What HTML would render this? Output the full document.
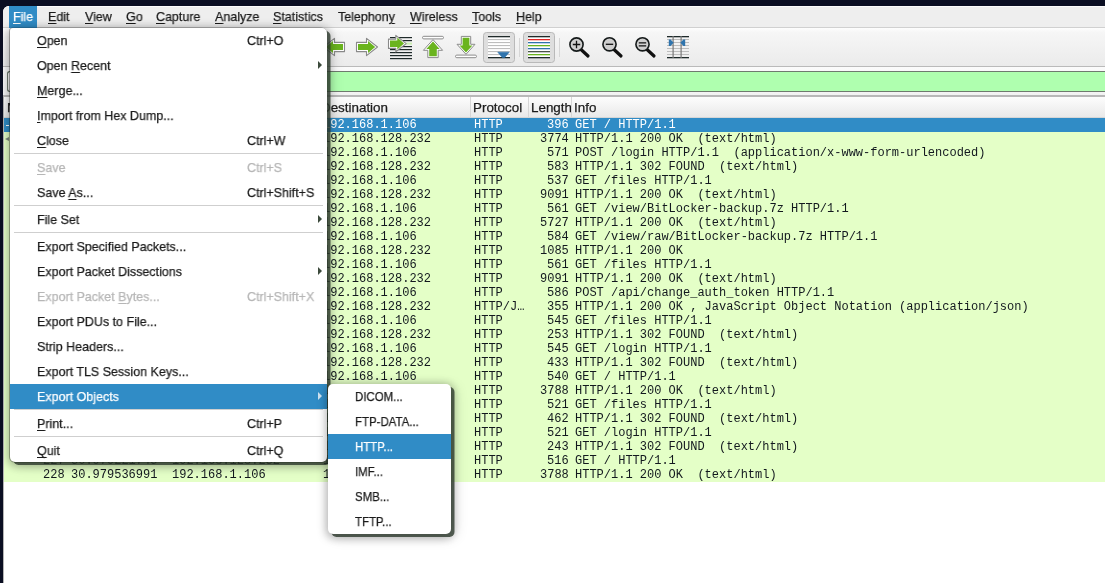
<!DOCTYPE html>
<html><head><meta charset="utf-8">
<style>
*{margin:0;padding:0;box-sizing:border-box}
html,body{width:1105px;height:583px;overflow:hidden;background:#0a0e22;font-family:"Liberation Sans",sans-serif;font-size:12px;color:#1b1b1b;position:relative}
#win{position:absolute;left:3px;top:6px;width:1102px;height:577px;background:#fff;border-top-left-radius:6px;overflow:hidden}
#menubar{position:absolute;left:3px;top:6px;width:1102px;height:22px;background:linear-gradient(#fcfcfc 0,#fcfcfc 1px,#eeeeee 1.5px,#eeeeee);border-bottom:1px solid #d0d0d0;border-top-left-radius:6px}
#menubar span{position:absolute;top:4px;line-height:14px;white-space:nowrap;font-size:13px;transform:scaleX(.96);transform-origin:0 50%}
#menubar .sel{background:#308cc6;color:#fff}
u{text-decoration:underline;text-underline-offset:2px;text-decoration-thickness:1px}
#toolbar{position:absolute;left:3px;top:28px;width:1102px;height:39px;background:linear-gradient(#fdfdfd,#f6f6f6 12%,#ebebeb);border-bottom:1px solid #bababa}
#filter{position:absolute;left:7px;top:71px;width:1110px;height:21px;background:#afffaf;border:1px solid #6f7a6f;border-radius:3px}
#hdr{position:absolute;left:3px;top:95px;width:1102px;height:23px;background:linear-gradient(#fdfdfd,#e9e9e9);border-top:2px solid #b8b8b8;border-bottom:1px solid #d6d6d6}
#hdr span{position:absolute;top:4px;line-height:14px;font-size:13px;transform:scaleX(1.03);transform-origin:0 50%}
#hdr i{position:absolute;top:0;width:1px;height:20px;background:#d6d6d6}
.row{position:absolute;left:3px;width:1102px;height:14px;background:#e4ffc7;font-family:"Liberation Mono",monospace;font-size:12px;line-height:14px;color:#12181e;white-space:pre}
.row.s{background:#308cc6;color:#fff}
.row span{position:absolute;top:0}
.menu{position:absolute;background:#fff;border-radius:5px;box-shadow:-0.5px 0 0 .5px rgba(0,0,0,.3),3.5px 3px 0 rgba(45,58,45,.8),0 2px 10px 2px rgba(0,0,0,.27),4px 3px 14px rgba(0,0,0,.15)}
.mi{position:absolute;left:0;width:100%;height:25px;line-height:25px;white-space:nowrap}
.mi .t,.mi .k{font-size:13px;transform:scaleX(.96);transform-origin:0 50%}
.mi .t{position:absolute;left:27px}
.mi .k{position:absolute;left:237px}
.mi.d{color:#b6b6b6}
.mi.h{background:#308cc6;color:#fff}
.arr{position:absolute;left:307.5px;top:7.5px;width:0;height:0;border-left:4px solid #3c4a3c;border-top:4px solid transparent;border-bottom:4px solid transparent}
.mi.h .arr{border-left-color:#cfe3f1}
.sep{position:absolute;left:4px;right:4px;height:1px;background:#cfcfcf}

.el{letter-spacing:0}

#submenu .mi .t{transform:scaleX(.88)}
#band1{position:absolute;left:3px;top:67px;width:1102px;height:29px;background:linear-gradient(#fbfbfb,#f2f2f2)}
#bm{position:absolute;left:7px;top:71px;width:24px;height:21px;background:linear-gradient(#fafafa,#e8e8e8);border:1px solid #6f7a6f;border-right:none;border-radius:3px 0 0 3px}
.ind{position:absolute;background:#fff}
.mi .t,.mi .k,#menubar span,#hdr span,.row span{will-change:transform;-webkit-text-stroke:.25px currentColor}
.row span{-webkit-text-stroke:0}
#submenu{box-shadow:3.5px 3px 0 rgba(45,58,45,.8),0 2px 10px 2px rgba(0,0,0,.27),4px 3px 14px rgba(0,0,0,.15)}
#filemenu{border-top-left-radius:3px}

</style></head><body>
<div id="win"></div>
<div id="menubar">
  <div style="position:absolute;left:6px;top:0;width:28px;height:22px;background:#308cc6"></div><span style="left:10px;color:#fff"><u>F</u>ile</span>
  <span style="left:45px"><u>E</u>dit</span>
  <span style="left:82px"><u>V</u>iew</span>
  <span style="left:123px"><u>G</u>o</span>
  <span style="left:153px"><u>C</u>apture</span>
  <span style="left:212px"><u>A</u>nalyze</span>
  <span style="left:270px"><u>S</u>tatistics</span>
  <span style="left:335px">Telephon<u>y</u></span>
  <span style="left:407px"><u>W</u>ireless</span>
  <span style="left:469px"><u>T</u>ools</span>
  <span style="left:513px"><u>H</u>elp</span>
</div>
<div id="toolbar"></div>
<svg id="tbsvg" width="1105" height="68" viewBox="0 0 1105 68" style="position:absolute;left:0;top:0">
 <defs>
  <g id="arrowR">
   <path d="M0.5,-4.6 H10.5 V-8.6 L21.5,0 L10.5,8.6 V4.6 H0.5 Z" fill="#fff" stroke="#8a8a8a" stroke-width="1.1" stroke-linejoin="round"/>
   <path d="M2,-3 H12 V-6 L19.2,0 L12,6 V3 H2 Z" fill="#6ab41e"/>
  </g>
 </defs>
 <!-- back arrow (partially hidden) -->
 <g transform="translate(345,47) scale(-1,1)"><use href="#arrowR"/></g>
 <!-- forward arrow -->
 <g transform="translate(356,47)"><use href="#arrowR"/></g>
 <!-- go to packet -->
 <g>
  <rect x="390" y="37" width="22" height="1.2" fill="#1f2a2a"/>
  <rect x="390" y="40" width="22" height="1.2" fill="#1f2a2a"/>
  <rect x="400" y="42.6" width="12" height="2" fill="#c8eeae"/>
  <rect x="390" y="46" width="22" height="1.2" fill="#1f2a2a"/>
  <rect x="390" y="49" width="22" height="1.2" fill="#1f2a2a"/>
  <rect x="390" y="52" width="22" height="1.2" fill="#1f2a2a"/>
  <rect x="390" y="55" width="22" height="1.2" fill="#1f2a2a"/>
  <rect x="390" y="58" width="22" height="1.2" fill="#1f2a2a"/>
  <g transform="translate(388,43.6)">
   <path d="M0.5,-4.5 H7.8 V-8.2 L18.2,0 L7.8,8.2 V4.8 H0.5 Z" fill="#fff" stroke="#8a8a8a" stroke-width="1.1" stroke-linejoin="round"/>
   <path d="M2,-3 H9.3 V-6 L16,0 L9.3,6 V3.4 H2 Z" fill="#6ab41e"/>
  </g>
 </g>
 <!-- first packet -->
 <g>
  <rect x="422.5" y="36.3" width="21" height="2.6" rx="1.3" fill="#fff" stroke="#8a8a8a" stroke-width="1"/>
  <path d="M427.8,57.6 H438.2 V50.3 H442.6 L433,39.6 L423.4,50.3 H427.8 Z" fill="#fff" stroke="#8a8a8a" stroke-width="1" stroke-linejoin="round"/>
  <path d="M429.2,56.2 H436.8 V48.9 H439.6 L433,41.4 L426.4,48.9 H429.2 Z" fill="#6ab41e"/>
 </g>
 <!-- last packet -->
 <g>
  <rect x="455.5" y="55.1" width="21" height="2.6" rx="1.3" fill="#fff" stroke="#8a8a8a" stroke-width="1"/>
  <path d="M461.3,36.4 H470.7 V44.3 H475 L466,54.3 L457,44.3 H461.3 Z" fill="#fff" stroke="#8a8a8a" stroke-width="1" stroke-linejoin="round"/>
  <path d="M462.6,37.8 H469.4 V45.6 H472.4 L466,52.6 L459.6,45.6 H462.6 Z" fill="#6ab41e"/>
 </g>
 <!-- autoscroll pressed -->
 <g>
  <rect x="483.5" y="32.5" width="31" height="30" rx="3" fill="#dedede" stroke="#b9b9b9" stroke-width="1"/>
  <rect x="488" y="36" width="22" height="22" fill="#fff"/>
  <rect x="488" y="36" width="22" height="1.3" fill="#1f2a2a"/>
  <rect x="488" y="39" width="22" height="1.1" fill="#bdbdbd"/>
  <rect x="488" y="42" width="22" height="1.1" fill="#bdbdbd"/>
  <rect x="488" y="45" width="22" height="1.1" fill="#bdbdbd"/>
  <rect x="488" y="48" width="22" height="1.1" fill="#bdbdbd"/>
  <rect x="488" y="51" width="22" height="1.1" fill="#bdbdbd"/>
  <rect x="488" y="54" width="22" height="1.1" fill="#bdbdbd"/>
  <rect x="488" y="57" width="22" height="1.3" fill="#1f2a2a"/>
  <path d="M497.8,52.2 H509.2 L504.6,57.6 H502.4 Z" fill="#2f74ad" stroke="#2f74ad" stroke-width="0.6" stroke-linejoin="round"/>
 </g>
 <rect x="519" y="38" width="1" height="19" fill="#d6d6d6"/>
 <!-- colorize pressed -->
 <g>
  <rect x="523.5" y="32.5" width="31" height="30" rx="3" fill="#dedede" stroke="#b9b9b9" stroke-width="1"/>
  <rect x="528" y="36" width="22" height="22" fill="#fff"/>
  <rect x="528" y="36" width="22" height="1.3" fill="#1f2a2a"/>
  <rect x="528" y="39" width="22" height="1.3" fill="#e02626"/>
  <rect x="528" y="42" width="22" height="1.3" fill="#2f74ad"/>
  <rect x="528" y="45" width="22" height="1.3" fill="#6ab41e"/>
  <rect x="528" y="48" width="22" height="1.3" fill="#2f74ad"/>
  <rect x="528" y="51" width="22" height="1.3" fill="#4a5548"/>
  <rect x="528" y="54" width="22" height="1.3" fill="#6ab41e"/>
  <rect x="528" y="57" width="22" height="1.3" fill="#1f2a2a"/>
 </g>
 <rect x="559" y="38" width="1" height="19" fill="#d6d6d6"/>
 <!-- zoom in -->
 <g>
  <line x1="581" y1="49.5" x2="588" y2="56" stroke="#111" stroke-width="3.2" stroke-linecap="round"/>
  <circle cx="576.5" cy="44.5" r="6.6" fill="#cfcfcf" stroke="#151a1a" stroke-width="1.6"/>
  <path d="M572.8,44.5 H580.2 M576.5,40.8 V48.2" stroke="#111" stroke-width="1.3"/>
 </g>
 <!-- zoom out -->
 <g>
  <line x1="614" y1="49.5" x2="621" y2="56" stroke="#111" stroke-width="3.2" stroke-linecap="round"/>
  <circle cx="609.5" cy="44.3" r="6.6" fill="#cfcfcf" stroke="#151a1a" stroke-width="1.6"/>
  <path d="M605.8,44.3 H613.2" stroke="#111" stroke-width="1.3"/>
 </g>
 <!-- zoom 1:1 -->
 <g>
  <line x1="647" y1="49.5" x2="654" y2="56" stroke="#111" stroke-width="3.2" stroke-linecap="round"/>
  <circle cx="642.5" cy="44.3" r="6.6" fill="#cfcfcf" stroke="#151a1a" stroke-width="1.6"/>
  <path d="M638.8,42.8 H646.2 M638.8,45.8 H646.2" stroke="#111" stroke-width="1.2"/>
 </g>
 <!-- resize columns -->
 <g>
  <rect x="667" y="36" width="22" height="1.3" fill="#1f2a2a"/>
  <rect x="667" y="39" width="22" height="1" fill="#bdbdbd"/>
  <rect x="667" y="42" width="22" height="1" fill="#bdbdbd"/>
  <rect x="667" y="45" width="22" height="1" fill="#bdbdbd"/>
  <rect x="667" y="48" width="22" height="1" fill="#bdbdbd"/>
  <rect x="667" y="51" width="22" height="1" fill="#bdbdbd"/>
  <rect x="667" y="54" width="22" height="1" fill="#bdbdbd"/>
  <rect x="667" y="57" width="22" height="1.3" fill="#1f2a2a"/>
  <rect x="672.5" y="36" width="1.2" height="22" fill="#7a7a7a"/>
  <rect x="680.5" y="36" width="1.2" height="22" fill="#7a7a7a"/>
  <path d="M668.8,39.5 H670.6 L673.6,42.7 L670.6,46 H668.8 Z" fill="#2f74ad"/>
  <path d="M685.2,39.5 H683.4 L680.4,42.7 L683.4,46 H685.2 Z" fill="#2f74ad"/>
 </g>
</svg>

<div id="band1"></div>
<div id="filter"></div>
<div id="bm"></div>
<div id="hdr">
  <span style="left:4px">No.</span>
  <span style="left:318px">Destination</span>
  <span style="left:470px">Protocol</span>
  <span style="left:528px">Length</span>
  <span style="left:571px">Info</span>
  <i style="left:467px"></i><i style="left:525px"></i><i style="left:568px"></i>
</div>

<div id="rows">
<div class="row s" style="top:118px"><span class="r" style="right:1040px">1</span><span style="left:68px">0.000000000</span><span style="left:169px">192.168.128.232</span><span style="left:320px">192.168.1.106</span><span style="left:471px">HTTP</span><span class="r" style="right:536px">396</span><span style="left:572px">GET / HTTP/1.1</span></div><div class="row" style="top:132px"><span class="r" style="right:1040px">2</span><span style="left:68px">0.000000000</span><span style="left:169px">192.168.1.106</span><span style="left:320px">192.168.128.232</span><span style="left:471px">HTTP</span><span class="r" style="right:536px">3774</span><span style="left:572px">HTTP/1.1 200 OK  (text/html)</span></div><div class="row" style="top:146px"><span class="r" style="right:1040px">3</span><span style="left:68px">0.000000000</span><span style="left:169px">192.168.128.232</span><span style="left:320px">192.168.1.106</span><span style="left:471px">HTTP</span><span class="r" style="right:536px">571</span><span style="left:572px">POST /login HTTP/1.1  (application/x-www-form-urlencoded)</span></div><div class="row" style="top:160px"><span class="r" style="right:1040px">4</span><span style="left:68px">0.000000000</span><span style="left:169px">192.168.1.106</span><span style="left:320px">192.168.128.232</span><span style="left:471px">HTTP</span><span class="r" style="right:536px">583</span><span style="left:572px">HTTP/1.1 302 FOUND  (text/html)</span></div><div class="row" style="top:174px"><span class="r" style="right:1040px">5</span><span style="left:68px">0.000000000</span><span style="left:169px">192.168.128.232</span><span style="left:320px">192.168.1.106</span><span style="left:471px">HTTP</span><span class="r" style="right:536px">537</span><span style="left:572px">GET /files HTTP/1.1</span></div><div class="row" style="top:188px"><span class="r" style="right:1040px">6</span><span style="left:68px">0.000000000</span><span style="left:169px">192.168.1.106</span><span style="left:320px">192.168.128.232</span><span style="left:471px">HTTP</span><span class="r" style="right:536px">9091</span><span style="left:572px">HTTP/1.1 200 OK  (text/html)</span></div><div class="row" style="top:202px"><span class="r" style="right:1040px">7</span><span style="left:68px">0.000000000</span><span style="left:169px">192.168.128.232</span><span style="left:320px">192.168.1.106</span><span style="left:471px">HTTP</span><span class="r" style="right:536px">561</span><span style="left:572px">GET /view/BitLocker-backup.7z HTTP/1.1</span></div><div class="row" style="top:216px"><span class="r" style="right:1040px">8</span><span style="left:68px">0.000000000</span><span style="left:169px">192.168.1.106</span><span style="left:320px">192.168.128.232</span><span style="left:471px">HTTP</span><span class="r" style="right:536px">5727</span><span style="left:572px">HTTP/1.1 200 OK  (text/html)</span></div><div class="row" style="top:230px"><span class="r" style="right:1040px">9</span><span style="left:68px">0.000000000</span><span style="left:169px">192.168.128.232</span><span style="left:320px">192.168.1.106</span><span style="left:471px">HTTP</span><span class="r" style="right:536px">584</span><span style="left:572px">GET /view/raw/BitLocker-backup.7z HTTP/1.1</span></div><div class="row" style="top:244px"><span class="r" style="right:1040px">10</span><span style="left:68px">0.000000000</span><span style="left:169px">192.168.1.106</span><span style="left:320px">192.168.128.232</span><span style="left:471px">HTTP</span><span class="r" style="right:536px">1085</span><span style="left:572px">HTTP/1.1 200 OK</span></div><div class="row" style="top:258px"><span class="r" style="right:1040px">11</span><span style="left:68px">0.000000000</span><span style="left:169px">192.168.128.232</span><span style="left:320px">192.168.1.106</span><span style="left:471px">HTTP</span><span class="r" style="right:536px">561</span><span style="left:572px">GET /files HTTP/1.1</span></div><div class="row" style="top:272px"><span class="r" style="right:1040px">12</span><span style="left:68px">0.000000000</span><span style="left:169px">192.168.1.106</span><span style="left:320px">192.168.128.232</span><span style="left:471px">HTTP</span><span class="r" style="right:536px">9091</span><span style="left:572px">HTTP/1.1 200 OK  (text/html)</span></div><div class="row" style="top:286px"><span class="r" style="right:1040px">13</span><span style="left:68px">0.000000000</span><span style="left:169px">192.168.128.232</span><span style="left:320px">192.168.1.106</span><span style="left:471px">HTTP</span><span class="r" style="right:536px">586</span><span style="left:572px">POST /api/change_auth_token HTTP/1.1</span></div><div class="row" style="top:300px"><span class="r" style="right:1040px">14</span><span style="left:68px">0.000000000</span><span style="left:169px">192.168.1.106</span><span style="left:320px">192.168.128.232</span><span style="left:471px">HTTP/J…</span><span class="r" style="right:536px">355</span><span style="left:572px">HTTP/1.1 200 OK , JavaScript Object Notation (application/json)</span></div><div class="row" style="top:314px"><span class="r" style="right:1040px">15</span><span style="left:68px">0.000000000</span><span style="left:169px">192.168.128.232</span><span style="left:320px">192.168.1.106</span><span style="left:471px">HTTP</span><span class="r" style="right:536px">545</span><span style="left:572px">GET /files HTTP/1.1</span></div><div class="row" style="top:328px"><span class="r" style="right:1040px">16</span><span style="left:68px">0.000000000</span><span style="left:169px">192.168.1.106</span><span style="left:320px">192.168.128.232</span><span style="left:471px">HTTP</span><span class="r" style="right:536px">253</span><span style="left:572px">HTTP/1.1 302 FOUND  (text/html)</span></div><div class="row" style="top:342px"><span class="r" style="right:1040px">17</span><span style="left:68px">0.000000000</span><span style="left:169px">192.168.128.232</span><span style="left:320px">192.168.1.106</span><span style="left:471px">HTTP</span><span class="r" style="right:536px">545</span><span style="left:572px">GET /login HTTP/1.1</span></div><div class="row" style="top:356px"><span class="r" style="right:1040px">18</span><span style="left:68px">0.000000000</span><span style="left:169px">192.168.1.106</span><span style="left:320px">192.168.128.232</span><span style="left:471px">HTTP</span><span class="r" style="right:536px">433</span><span style="left:572px">HTTP/1.1 302 FOUND  (text/html)</span></div><div class="row" style="top:370px"><span class="r" style="right:1040px">19</span><span style="left:68px">0.000000000</span><span style="left:169px">192.168.128.232</span><span style="left:320px">192.168.1.106</span><span style="left:471px">HTTP</span><span class="r" style="right:536px">540</span><span style="left:572px">GET / HTTP/1.1</span></div><div class="row" style="top:384px"><span class="r" style="right:1040px">20</span><span style="left:68px">0.000000000</span><span style="left:169px">192.168.1.106</span><span style="left:320px">192.168.128.232</span><span style="left:471px">HTTP</span><span class="r" style="right:536px">3788</span><span style="left:572px">HTTP/1.1 200 OK  (text/html)</span></div><div class="row" style="top:398px"><span class="r" style="right:1040px">21</span><span style="left:68px">0.000000000</span><span style="left:169px">192.168.128.232</span><span style="left:320px">192.168.1.106</span><span style="left:471px">HTTP</span><span class="r" style="right:536px">521</span><span style="left:572px">GET /files HTTP/1.1</span></div><div class="row" style="top:412px"><span class="r" style="right:1040px">22</span><span style="left:68px">0.000000000</span><span style="left:169px">192.168.1.106</span><span style="left:320px">192.168.128.232</span><span style="left:471px">HTTP</span><span class="r" style="right:536px">462</span><span style="left:572px">HTTP/1.1 302 FOUND  (text/html)</span></div><div class="row" style="top:426px"><span class="r" style="right:1040px">23</span><span style="left:68px">0.000000000</span><span style="left:169px">192.168.128.232</span><span style="left:320px">192.168.1.106</span><span style="left:471px">HTTP</span><span class="r" style="right:536px">521</span><span style="left:572px">GET /login HTTP/1.1</span></div><div class="row" style="top:440px"><span class="r" style="right:1040px">24</span><span style="left:68px">0.000000000</span><span style="left:169px">192.168.1.106</span><span style="left:320px">192.168.128.232</span><span style="left:471px">HTTP</span><span class="r" style="right:536px">243</span><span style="left:572px">HTTP/1.1 302 FOUND  (text/html)</span></div><div class="row" style="top:454px"><span class="r" style="right:1040px">227</span><span style="left:68px">30.979221745</span><span style="left:169px">192.168.128.232</span><span style="left:320px">192.168.1.106</span><span style="left:471px">HTTP</span><span class="r" style="right:536px">516</span><span style="left:572px">GET / HTTP/1.1</span></div><div class="row" style="top:468px"><span class="r" style="right:1040px">228</span><span style="left:68px">30.979536991</span><span style="left:169px">192.168.1.106</span><span style="left:320px">192.168.128.232</span><span style="left:471px">HTTP</span><span class="r" style="right:536px">3788</span><span style="left:572px">HTTP/1.1 200 OK  (text/html)</span></div>
</div>
<!--IND--><div style="position:absolute;left:3px;top:95px;width:1px;height:488px;background:#b4b4b4"></div><div style="position:absolute;left:6px;top:125px;width:3px;height:1px;background:#fff"></div>
<svg style="position:absolute;left:0;top:0" width="12" height="583"><path d="M5,139 L9,137 V141 Z" fill="#7d8a7d"/></svg>
<div class="menu" id="filemenu" style="left:10px;top:28px;width:317px;height:434px">
<div class="mi" style="top:0px"><span class="t"><u>O</u>pen</span><span class="k">Ctrl+O</span></div>
<div class="mi" style="top:25px"><span class="t">Open <u>R</u>ecent</span><i class="arr"></i></div>
<div class="mi" style="top:50px"><span class="t"><u>M</u>erge<span class="el">...</span></span></div>
<div class="mi" style="top:75px"><span class="t"><u>I</u>mport from Hex Dump<span class="el">...</span></span></div>
<div class="mi" style="top:100px"><span class="t"><u>C</u>lose</span><span class="k">Ctrl+W</span></div>
<div class="sep" style="top:125px"></div>
<div class="mi d" style="top:127px"><span class="t"><u>S</u>ave</span><span class="k">Ctrl+S</span></div>
<div class="mi" style="top:152px"><span class="t">Save <u>A</u>s<span class="el">...</span></span><span class="k">Ctrl+Shift+S</span></div>
<div class="sep" style="top:177px"></div>
<div class="mi" style="top:179px"><span class="t">File Set</span><i class="arr"></i></div>
<div class="sep" style="top:204px"></div>
<div class="mi" style="top:206px"><span class="t">Export Specified Packets<span class="el">...</span></span></div>
<div class="mi" style="top:231px"><span class="t">Export Packet Dissections</span><i class="arr"></i></div>
<div class="mi d" style="top:256px"><span class="t">Export Packet <u>B</u>ytes<span class="el">...</span></span><span class="k">Ctrl+Shift+X</span></div>
<div class="mi" style="top:281px"><span class="t">Export PDUs to File<span class="el">...</span></span></div>
<div class="mi" style="top:306px"><span class="t">Strip Headers<span class="el">...</span></span></div>
<div class="mi" style="top:331px"><span class="t">Export TLS Session Keys<span class="el">...</span></span></div>
<div class="mi h" style="top:356px"><span class="t">Export Objects</span><i class="arr"></i></div>
<div class="sep" style="top:381px"></div>
<div class="mi" style="top:383px"><span class="t"><u>P</u>rint<span class="el">...</span></span><span class="k">Ctrl+P</span></div>
<div class="sep" style="top:408px"></div>
<div class="mi" style="top:410px"><span class="t"><u>Q</u>uit</span><span class="k">Ctrl+Q</span></div>
</div>
<div class="menu" id="submenu" style="left:328px;top:384px;width:122.5px;height:150px">
<div class="mi" style="top:0px"><span class="t" style="left:27px">DICOM<span class="el">...</span></span></div><div class="mi" style="top:25px"><span class="t" style="left:27px">FTP-DATA<span class="el">...</span></span></div><div class="mi h" style="top:50px"><span class="t" style="left:27px">HTTP<span class="el">...</span></span></div><div class="mi" style="top:75px"><span class="t" style="left:27px">IMF<span class="el">...</span></span></div><div class="mi" style="top:100px"><span class="t" style="left:27px">SMB<span class="el">...</span></span></div><div class="mi" style="top:125px"><span class="t" style="left:27px">TFTP<span class="el">...</span></span></div>
</div>
</body></html>
